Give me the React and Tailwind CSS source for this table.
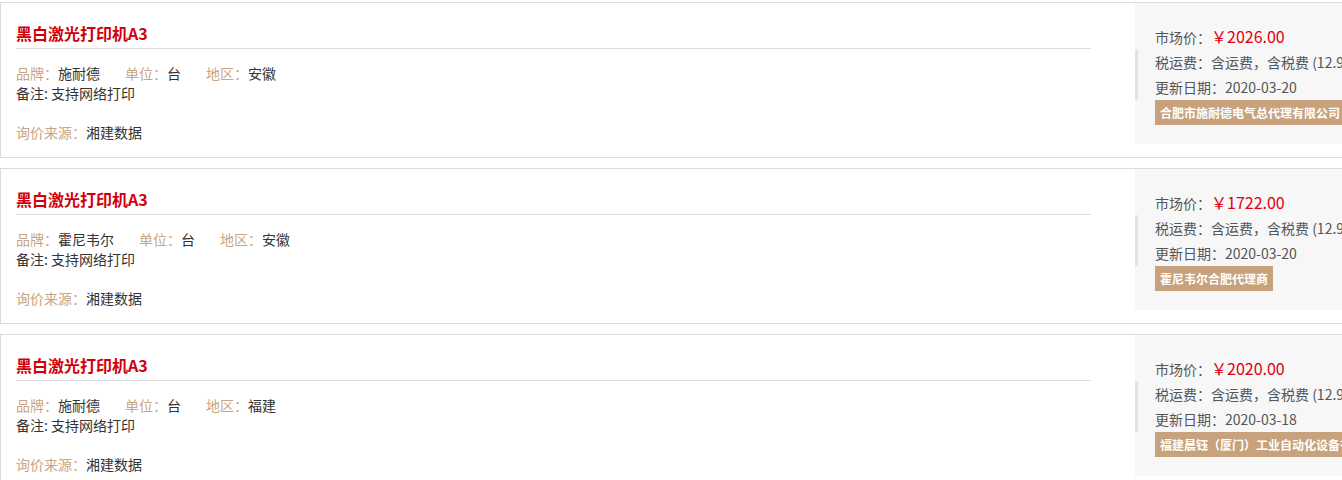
import React from "react";

const items = [
  {
    title: "黑白激光打印机A3",
    brand: "施耐德",
    unit: "台",
    area: "安徽",
    note: "支持网络打印",
    source: "湘建数据",
    price: "2026.00",
    date: "2020-03-20",
    supplier: "合肥市施耐德电气总代理有限公司",
  },
  {
    title: "黑白激光打印机A3",
    brand: "霍尼韦尔",
    unit: "台",
    area: "安徽",
    note: "支持网络打印",
    source: "湘建数据",
    price: "1722.00",
    date: "2020-03-20",
    supplier: "霍尼韦尔合肥代理商",
  },
  {
    title: "黑白激光打印机A3",
    brand: "施耐德",
    unit: "台",
    area: "福建",
    note: "支持网络打印",
    source: "湘建数据",
    price: "2020.00",
    date: "2020-03-18",
    supplier: "福建晨钰（厦门）工业自动化设备有限公司",
  },
];

function Field({ label, value }) {
  return (
    <span className="mr-[25px]">
      <span className="text-[#c9a583]">{label}：</span>
      <span className="text-[#333]">{value}</span>
    </span>
  );
}

function PriceCard({ item }) {
  return (
    <div className="flex h-[156px] border border-[#dcdcdc] mb-[10px] bg-white">
      {/* left info */}
      <div className="w-[1134px] shrink-0 pl-[15px] pr-[44px]">
        <div className="pt-[19px] pb-[4px] border-b border-[#dcdcdc]">
          <h3 className="text-[16px] leading-[22px] font-bold text-[#d0000b]">{item.title}</h3>
        </div>
        <div className="mt-[14px] text-[14px] leading-[20px]">
          <div className="flex whitespace-nowrap">
            <Field label="品牌" value={item.brand} />
            <Field label="单位" value={item.unit} />
            <Field label="地区" value={item.area} />
          </div>
          <div className="text-[#333]">备注: {item.note}</div>
          <div className="mt-[19px]">
            <span className="text-[#c9a583]">询价来源：</span>
            <span className="text-[#333]">{item.source}</span>
          </div>
        </div>
      </div>

      {/* right price panel */}
      <div className="relative w-[260px] shrink-0 h-[141px] bg-[#f7f7f7] pl-[20px] pt-[21px] text-[14px] leading-[25px] text-[#555] whitespace-nowrap">
        <div className="absolute left-0 top-[46px] w-[3px] h-[51px] rounded-sm bg-[#e2e2e2]" />
        <div>
          市场价：<span className="text-[16px] text-[#e0000f]">￥{item.price}</span>
        </div>
        <div>税运费：含运费，含税费 (12.9%)</div>
        <div>更新日期：{item.date}</div>
        <div className="inline-block h-[25px] px-[5px] bg-[#c8a27c] text-white text-[12px] leading-[25px] font-semibold">
          {item.supplier}
        </div>
      </div>
    </div>
  );
}

export default function App() {
  return (
    <div
      className="w-[1342px] h-[480px] overflow-hidden bg-white pt-[2px]"
      style={{ fontFamily: '"Noto Sans CJK SC", "Noto Sans", sans-serif' }}
    >
      <div className="w-[1400px]">
        {items.map((item, i) => (
          <PriceCard key={i} item={item} />
        ))}
      </div>
    </div>
  );
}
